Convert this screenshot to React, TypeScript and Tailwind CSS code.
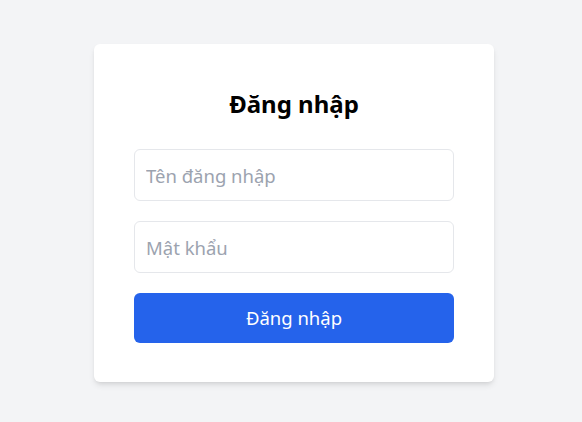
import React from 'react';

const LoginCard: React.FC = () => {
  return (
    <div className="w-[400px] bg-white rounded-md shadow-md px-10 pt-10 pb-[39px]">
      <h1 className="text-[24px] leading-[40px] font-bold text-center text-black mb-[25px]">
        Đăng nhập
      </h1>
      <form className="flex flex-col gap-5" onSubmit={(e) => e.preventDefault()}>
        <input
          type="text"
          placeholder="Tên đăng nhập"
          className="h-[52px] w-full rounded-md border border-[#e5e7eb] px-[11px] text-[18.5px] text-gray-800 placeholder:text-[#9ca3af] outline-none"
        />
        <input
          type="password"
          placeholder="Mật khẩu"
          className="h-[52px] w-full rounded-md border border-[#e5e7eb] px-[11px] text-[18.5px] text-gray-800 placeholder:text-[#9ca3af] outline-none"
        />
        <button
          type="submit"
          className="h-[50px] w-full rounded-md bg-[#2563eb] text-[18.5px] text-white"
        >
          Đăng nhập
        </button>
      </form>
    </div>
  );
};

export default function App() {
  return (
    <div
      className="min-h-screen bg-[#f3f4f6] flex items-start justify-center pt-[44px] pl-[6px]"
      style={{ fontFamily: '"Noto Sans", "Open Sans", sans-serif' }}
    >
      <LoginCard />
    </div>
  );
}
